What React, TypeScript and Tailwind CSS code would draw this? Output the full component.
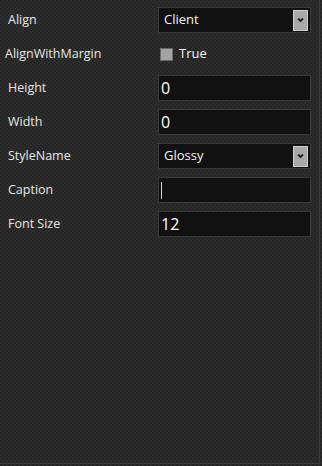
import { useState } from "react";

type Row =
  | { label: string; kind: "select"; value: string; indent?: boolean }
  | { label: string; kind: "check"; value: string; indent?: boolean }
  | { label: string; kind: "input"; value: string; caret?: boolean; indent?: boolean };

const rows: Row[] = [
  { label: "Align", kind: "select", value: "Client" },
  { label: "AlignWithMargin", kind: "check", value: "True", indent: true },
  { label: "Height", kind: "input", value: "0" },
  { label: "Width", kind: "input", value: "0" },
  { label: "StyleName", kind: "select", value: "Glossy" },
  { label: "Caption", kind: "input", value: "", caret: true },
  { label: "Font Size", kind: "input", value: "12" },
];

const Chevron = () => (
  <svg width="9" height="6" viewBox="0 0 9 6">
    <path d="M2 1.5 L4.5 4 L7 1.5" stroke="#222222" strokeWidth="1.8" fill="none" />
  </svg>
);

const SelectBox = ({ value }: { value: string }) => (
  <div className="flex items-center justify-between w-[153px] h-[26px] bg-[#111111] border border-[#3a3a3a] pl-[5px] pr-[2px]">
    <span className="text-[13px] text-[#f2f2f2]">{value}</span>
    <div className="flex items-center justify-center w-[15px] h-[21px] bg-[#a9a9a9] border border-[#cfcfcf]">
      <Chevron />
    </div>
  </div>
);

const InputBox = ({ value, caret }: { value: string; caret?: boolean }) => (
  <div className="flex items-center w-[153px] h-[26px] bg-[#111111] border border-[#3a3a3a] pl-[2px]">
    {caret ? (
      <div className="w-px h-[17px] bg-[#d8d8d8]" />
    ) : (
      <span className="text-[16px] text-white leading-none">{value}</span>
    )}
  </div>
);

export default function App() {
  const [checked] = useState(false);

  return (
    <div
      className="w-[322px] h-[466px] bg-[#272727] bg-[image:repeating-conic-gradient(#2d2d2d_0_25%,#252525_0_50%)] bg-[length:4px_4px]"
      style={{ fontFamily: '"Open Sans", "Noto Sans", sans-serif' }}
    >
      <div className="w-[320px] h-[464px] border-r border-b border-[#3c3c3c] pt-[7px] flex flex-col gap-[8px]">
        {rows.map((r) => (
          <div key={r.label} className="flex items-center h-[26px]">
            <div className={`w-[158px] text-[12.5px] text-[#e6e6e6] ${r.indent ? "pl-[5px]" : "pl-[8px]"}`}>
              {r.label}
            </div>
            {r.kind === "select" && <SelectBox value={r.value} />}
            {r.kind === "input" && <InputBox value={r.value} caret={r.caret} />}
            {r.kind === "check" && (
              <div className="flex items-center gap-[6px] pl-[2px]">
                <div
                  className={`w-[13px] h-[13px] border border-[#6a6a6a] ${checked ? "bg-[#dddddd]" : "bg-[#a3a3a3]"}`}
                />
                <span className="text-[13px] text-[#f2f2f2]">{r.value}</span>
              </div>
            )}
          </div>
        ))}
      </div>
    </div>
  );
}
